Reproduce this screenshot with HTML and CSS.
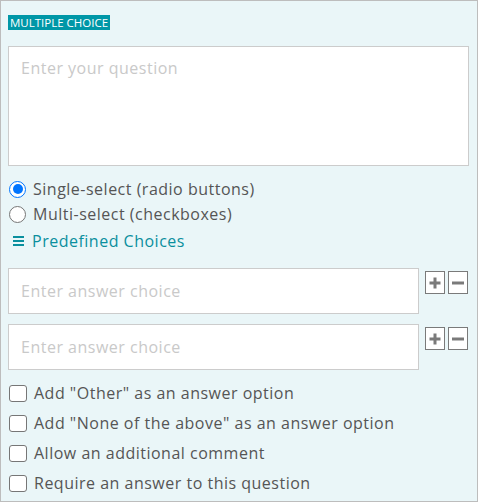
FILE: index.html
```html
<!DOCTYPE html>
<html>
<head>
<meta charset="utf-8">
<link rel="stylesheet" href="styles.css">
</head>
<body>
<div class="panel">
  <div class="badge-row"><span class="badge">MULTIPLE CHOICE</span></div>
  <div class="question">Enter your question</div>
  <div class="radios">
    <label class="opt"><span class="radio checked"></span><span>Single-select (radio buttons)</span></label>
    <label class="opt"><span class="radio"></span><span>Multi-select (checkboxes)</span></label>
  </div>
  <div class="predef"><span class="burger"><i></i><i></i><i></i></span>Predefined Choices</div>
  <div class="answers">
    <div class="answer-row">
      <div class="answer">Enter answer choice</div>
      <div class="btns">
        <span class="btn"><svg width="14" height="14" viewBox="0 0 14 14"><path d="M7 1.5v11M1.5 7h11" stroke="#7a7a7a" stroke-width="3"/></svg></span>
        <span class="btn"><svg width="14" height="14" viewBox="0 0 14 14"><path d="M1 7h12" stroke="#7a7a7a" stroke-width="3"/></svg></span>
      </div>
    </div>
    <div class="answer-row">
      <div class="answer">Enter answer choice</div>
      <div class="btns">
        <span class="btn"><svg width="14" height="14" viewBox="0 0 14 14"><path d="M7 1.5v11M1.5 7h11" stroke="#7a7a7a" stroke-width="3"/></svg></span>
        <span class="btn"><svg width="14" height="14" viewBox="0 0 14 14"><path d="M1 7h12" stroke="#7a7a7a" stroke-width="3"/></svg></span>
      </div>
    </div>
  </div>
  <div class="checks">
    <label class="opt"><span class="box"></span><span>Add "Other" as an answer option</span></label>
    <label class="opt"><span class="box"></span><span>Add "None of the above" as an answer option</span></label>
    <label class="opt"><span class="box"></span><span>Allow an additional comment</span></label>
    <label class="opt"><span class="box"></span><span>Require an answer to this question</span></label>
  </div>
</div>
</body>
</html>
```
FILE: styles.css
```css
html, body { margin: 0; padding: 0; }
body { font-family: "Open Sans", "Noto Sans", sans-serif; color: #555; }
.panel {
  width: 478px; height: 502px; box-sizing: border-box;
  border: 1px solid #bdbdbd; background: #eaf6f8;
  padding: 14px 8px 0 7px;
}
.badge-row { height: 15px; display: flex; }
.badge {
  background: #0097a7; color: #fff; font-size: 11.5px; line-height: 15px;
  padding: 0 2px; font-family: "Open Sans", sans-serif;
}
.question {
  margin-top: 16px; height: 120px; box-sizing: border-box;
  background: #fff; border: 1px solid #cccccc;
  padding: 10px 12px; font-size: 16px; color: #c9c9c9; line-height: 22px; letter-spacing: 0.5px;
}
.radios { margin-top: 12px; display: flex; flex-direction: column; gap: 3px; }
.opt { display: flex; align-items: center; gap: 7px; font-size: 16px; line-height: 22px; color: #555; height: 22px; letter-spacing: 0.5px; }
.radio {
  width: 15px; height: 15px; border-radius: 50%; border: 1px solid #767676; background: #fff;
  box-sizing: content-box; margin-left: 1px; flex: none; position: relative;
}
.radio.checked { border: 1px solid #0075ff; }
.radio.checked::after {
  content: ""; position: absolute; left: 2.5px; top: 2.5px; width: 10px; height: 10px;
  border-radius: 50%; background: #0075ff;
}
.predef { margin-top: 5px; color: #0a8f9e; font-size: 16px; line-height: 22px; display: flex; align-items: center; gap: 8px; padding-left: 5px; letter-spacing: 0.5px; }
.burger { display: flex; flex-direction: column; gap: 2px; width: 11px; }
.burger i { display: block; height: 2px; background: #0a8f9e; }
.answers { margin-top: 16px; display: flex; flex-direction: column; gap: 10px; }
.answer-row { display: flex; align-items: flex-start; gap: 6px; }
.answer {
  width: 411px; height: 46px; box-sizing: border-box; background: #fff; border: 1px solid #cccccc;
  padding: 0 12px; font-size: 16px; line-height: 44px; color: #c9c9c9; letter-spacing: 0.5px;
}
.btns { display: flex; gap: 3px; margin-top: 3px; }
.btn {
  width: 20px; height: 23px; box-sizing: border-box; border: 1px solid #7a7a7a; background: #fff;
  display: flex; align-items: center; justify-content: center;
}
.checks { margin-top: 12px; display: flex; flex-direction: column; gap: 8px; }
.box {
  width: 16px; height: 15px; border: 1px solid #767676; border-radius: 3px; background: #fff;
  margin-left: 1px; flex: none;
}
```
